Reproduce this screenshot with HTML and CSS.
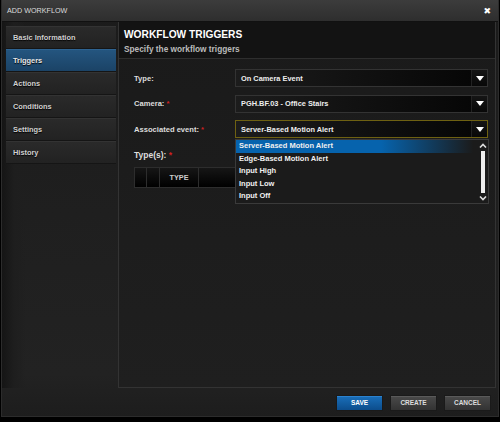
FILE: index.html
```html
<!DOCTYPE html>
<html lang="en">
<head>
    <meta charset="UTF-8">
    <title>Add Workflow</title>
    <link rel="stylesheet" href="styles.css">
</head>
<body>
    <div class="dialog">
        <div class="titlebar">
            <span class="title">ADD WORKFLOW</span>
            <span class="close">&#x2716;</span>
        </div>

        <div class="dialog-body">
            <ul class="sidebar">
                <li>Basic Information</li>
                <li class="active">Triggers</li>
                <li>Actions</li>
                <li>Conditions</li>
                <li>Settings</li>
                <li>History</li>
            </ul>

            <div class="panel">
                <div class="panel-header">
                    <h2>WORKFLOW TRIGGERS</h2>
                    <p>Specify the workflow triggers</p>
                </div>

                <div class="form">
                    <div class="row">
                        <label>Type:</label>
                        <div class="select">
                            <span>On Camera Event</span>
                            <span class="arrow"><svg width="8" height="5" viewBox="0 0 8 5"><path d="M0 0h8L4 5z" fill="#fff"/></svg></span>
                        </div>
                    </div>
                    <div class="row">
                        <label>Camera: <em>*</em></label>
                        <div class="select">
                            <span>PGH.BF.03 - Office Stairs</span>
                            <span class="arrow"><svg width="8" height="5" viewBox="0 0 8 5"><path d="M0 0h8L4 5z" fill="#fff"/></svg></span>
                        </div>
                    </div>
                    <div class="row">
                        <label>Associated event: <em>*</em></label>
                        <div class="select focused">
                            <span>Server-Based Motion Alert</span>
                            <span class="arrow"><svg width="8" height="5" viewBox="0 0 8 5"><path d="M0 0h8L4 5z" fill="#fff"/></svg></span>
                        </div>
                        <div class="dropdown">
                            <ul class="options">
                                <li class="selected">Server-Based Motion Alert</li>
                                <li>Edge-Based Motion Alert</li>
                                <li>Input High</li>
                                <li>Input Low</li>
                                <li>Input Off</li>
                            </ul>
                            <div class="scrollbar">
                                <svg width="8" height="5" viewBox="0 0 8 5"><path d="M1 4.5L4 1.5 7 4.5" stroke="#ddd" stroke-width="1.6" fill="none"/></svg>
                                <div class="thumb"></div>
                                <svg width="8" height="5" viewBox="0 0 8 5"><path d="M1 .5L4 3.5 7 .5" stroke="#ddd" stroke-width="1.6" fill="none"/></svg>
                            </div>
                        </div>
                    </div>

                    <div class="types-label">Type(s): <em>*</em></div>
                    <div class="types-table">
                        <div class="col c1"></div>
                        <div class="col c2"></div>
                        <div class="col c3">TYPE</div>
                        <div class="col c4"></div>
                    </div>
                </div>
            </div>
        </div>

        <div class="footer">
            <button class="btn primary">SAVE</button>
            <button class="btn">CREATE</button>
            <button class="btn">CANCEL</button>
        </div>
    </div>
</body>
</html>
```

FILE: styles.css
```css
* {
    box-sizing: border-box;
    margin: 0;
    padding: 0;
}

body {
    background-color: #000;
    font-family: 'Liberation Sans', Arial, sans-serif;
    width: 500px;
    height: 422px;
    overflow: hidden;
}

.dialog {
    width: 498px;
    height: 417px;
    margin-left: 1px;
    background: linear-gradient(to bottom, #1b1b1b, #222 90%, #1d1d1d);
    border: 1px solid #2c2c2c;
    border-top: none;
    display: flex;
    flex-direction: column;
}

.titlebar {
    height: 22px;
    background: linear-gradient(to bottom, #3c3c3c, #2e2e2e);
    border-bottom: 1px solid #111;
    display: flex;
    align-items: center;
    justify-content: space-between;
    padding: 0 7px 0 5px;
}

.title {
    color: #ddd;
    font-size: 7.2px;
}

.close {
    color: #fff;
    font-size: 9px;
    font-family: 'DejaVu Sans', sans-serif;
}

.dialog-body {
    flex: 1;
    display: flex;
    padding-left: 4px;
    background: linear-gradient(to right, #151515, #1e1e1e 12px, transparent 24px);
}

.sidebar {
    list-style: none;
    width: 110px;
    margin-top: 4px;
    margin-right: 2px;
    align-self: flex-start;
}

.sidebar li {
    height: 23px;
    line-height: 22px;
    padding-left: 7px;
    color: #d0d0d0;
    font-size: 7.4px;
    font-weight: bold;
    text-shadow: 0 1px 1px #000;
    background: linear-gradient(to bottom, #2a2a2a, #222);
    border-top: 1px solid #333;
    border-bottom: 1px solid #151515;
}

.sidebar li.active {
    background: linear-gradient(to bottom, #24557f, #1b4366);
    border-top-color: #2e6391;
    color: #e8e8e8;
}

.panel {
    width: 378px;
    height: 366px;
    border: 1px solid #333;
    border-top: none;
    background: linear-gradient(to bottom, #1a1a1a, #1f1f1f);
}

.panel-header {
    height: 37px;
    background-color: #131313;
    border-bottom: 1px solid #2e2e2e;
    padding: 6px 0 0 5px;
}

.panel-header h2 {
    color: #fff;
    font-size: 10.2px;
    font-weight: bold;
    line-height: 13px;
}

.panel-header p {
    color: #bbb;
    font-size: 8.3px;
    font-weight: bold;
    line-height: 13px;
    margin-top: 2px;
}

.form {
    padding: 10px 7px 0 15px;
}

.row {
    display: flex;
    align-items: center;
    height: 18px;
    margin-bottom: 7.5px;
    position: relative;
}

.row label {
    width: 101px;
    color: #ddd;
    font-size: 7.6px;
    font-weight: bold;
}

em {
    color: #d02020;
    font-style: normal;
}

.select {
    flex: 1;
    height: 18px;
    display: flex;
    align-items: center;
    justify-content: space-between;
    padding-left: 5px;
    background: linear-gradient(to right, #1c1c1c, #050505);
    border: 1px solid #333;
    color: #eee;
    font-size: 7.4px;
    font-weight: bold;
}

.select.focused {
    border-color: #6e6112;
}

.arrow {
    width: 16px;
    height: 100%;
    display: flex;
    align-items: center;
    justify-content: center;
    background: linear-gradient(to bottom, #151515, #080808);
    border-left: 1px solid #222;
}

.dropdown {
    position: absolute;
    left: 101px;
    top: 19px;
    width: 254px;
    height: 65px;
    background-color: #1b1b1b;
    border: 1px solid #3a3a3a;
    display: flex;
    z-index: 2;
}

.options {
    list-style: none;
    flex: 1;
}

.options li {
    height: 12.6px;
    line-height: 12.6px;
    padding-left: 3px;
    color: #f0f0f0;
    font-size: 7.5px;
    font-weight: bold;
}

.options li.selected {
    background: linear-gradient(to right, #0663ad 60%, #1b1b1b 98%);
}

.scrollbar {
    width: 10px;
    display: flex;
    flex-direction: column;
    align-items: center;
    padding: 3px 0 2px;
}

.thumb {
    width: 4px;
    flex: 1;
    margin: 3px 0;
    background-color: #eee;
}

.types-label {
    color: #ddd;
    font-size: 8.5px;
    font-weight: bold;
    margin-top: 11px;
    height: 12px;
    line-height: 12px;
}

.types-table {
    display: flex;
    width: 330px;
    height: 21px;
    margin-top: 6px;
    background: linear-gradient(to bottom, #161616, #000);
    border: 1px solid #2d2d2d;
}

.col {
    border-right: 1px solid #2d2d2d;
    color: #ccc;
    font-size: 7.3px;
    font-weight: bold;
    line-height: 20px;
    text-align: center;
}

.c1 { width: 12px; }
.c2 { width: 13px; }
.c3 { width: 39px; }
.c4 { flex: 1; border-right: none; }

.footer {
    height: 28px;
    display: flex;
    justify-content: flex-end;
    align-items: center;
    gap: 7px;
    padding: 1px 7px 0 0;
}

.btn {
    width: 47px;
    height: 16px;
    font-family: 'Liberation Sans', Arial, sans-serif;
    font-size: 6.5px;
    font-weight: bold;
    color: #ddd;
    background: linear-gradient(to bottom, #4a4a4a, #333);
    border: 1px solid #1a1a1a;
    box-shadow: inset 0 1px 0 #5a5a5a;
    cursor: pointer;
}

.btn.primary {
    color: #fff;
    background: linear-gradient(to bottom, #1a6fba, #0c4d8c);
    box-shadow: inset 0 1px 0 #2b82cf;
}
```
